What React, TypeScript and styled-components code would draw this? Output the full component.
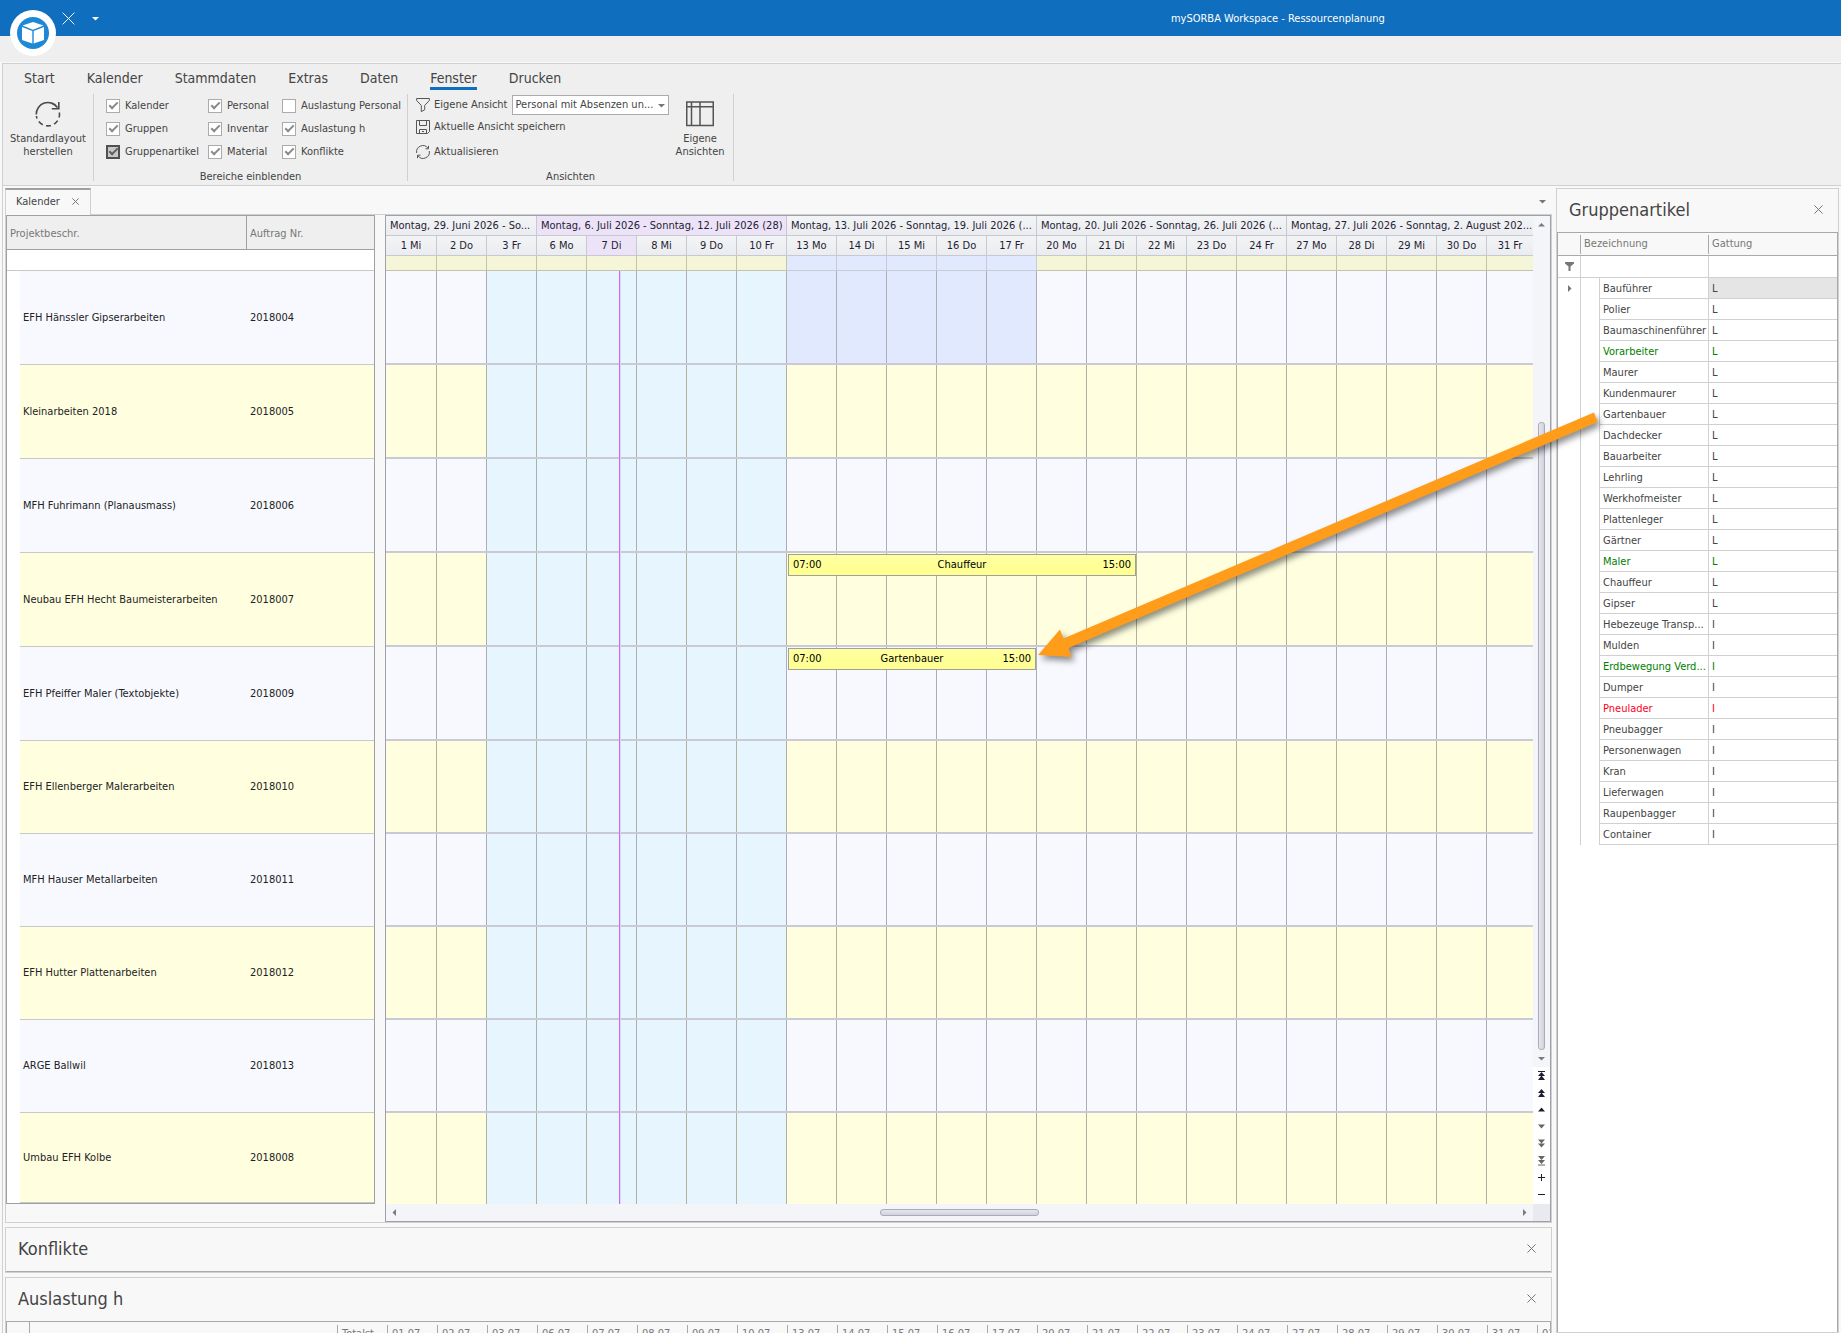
import React from "react";
import styled, { createGlobalStyle, css } from "styled-components";

/* ---------- data ---------- */

const projects = [
  { name: "EFH Hänssler Gipserarbeiten", nr: "2018004", height: 94 },
  { name: "Kleinarbeiten 2018", nr: "2018005", height: 94 },
  { name: "MFH Fuhrimann (Planausmass)", nr: "2018006", height: 94 },
  { name: "Neubau EFH Hecht Baumeisterarbeiten", nr: "2018007", height: 94 },
  { name: "EFH Pfeiffer Maler (Textobjekte)", nr: "2018009", height: 94 },
  { name: "EFH Ellenberger Malerarbeiten", nr: "2018010", height: 93 },
  { name: "MFH Hauser Metallarbeiten", nr: "2018011", height: 93 },
  { name: "EFH Hutter Plattenarbeiten", nr: "2018012", height: 93 },
  { name: "ARGE Ballwil", nr: "2018013", height: 93 },
  { name: "Umbau EFH Kolbe", nr: "2018008", height: 90 },
];

const weeks = [
  { title: "Montag, 29. Juni 2026 - So...", span: 3, current: false },
  { title: "Montag, 6. Juli 2026 - Sonntag, 12. Juli 2026 (28)", span: 5, current: true },
  { title: "Montag, 13. Juli 2026 - Sonntag, 19. Juli 2026 (...", span: 5, current: false },
  { title: "Montag, 20. Juli 2026 - Sonntag, 26. Juli 2026 (...", span: 5, current: false },
  { title: "Montag, 27. Juli 2026 - Sonntag, 2. August 202...", span: 5, current: false },
];

const days = [
  "1 Mi", "2 Do", "3 Fr",
  "6 Mo", "7 Di", "8 Mi", "9 Do", "10 Fr",
  "13 Mo", "14 Di", "15 Mi", "16 Do", "17 Fr",
  "20 Mo", "21 Di", "22 Mi", "23 Do", "24 Fr",
  "27 Mo", "28 Di", "29 Mi", "30 Do", "31 Fr",
];

const appointments = [
  { row: 3, column: 9, span: 7, title: "Chauffeur", from: "07:00", to: "15:00" },
  { row: 4, column: 9, span: 5, title: "Gartenbauer", from: "07:00", to: "15:00" },
];

const articles: { name: string; type: string; tone?: "green" | "red" }[] = [
  { name: "Bauführer", type: "L" },
  { name: "Polier", type: "L" },
  { name: "Baumaschinenführer", type: "L" },
  { name: "Vorarbeiter", type: "L", tone: "green" },
  { name: "Maurer", type: "L" },
  { name: "Kundenmaurer", type: "L" },
  { name: "Gartenbauer", type: "L" },
  { name: "Dachdecker", type: "L" },
  { name: "Bauarbeiter", type: "L" },
  { name: "Lehrling", type: "L" },
  { name: "Werkhofmeister", type: "L" },
  { name: "Plattenleger", type: "L" },
  { name: "Gärtner", type: "L" },
  { name: "Maler", type: "L", tone: "green" },
  { name: "Chauffeur", type: "L" },
  { name: "Gipser", type: "L" },
  { name: "Hebezeuge Transp...", type: "I" },
  { name: "Mulden", type: "I" },
  { name: "Erdbewegung Verd...", type: "I", tone: "green" },
  { name: "Dumper", type: "I" },
  { name: "Pneulader", type: "I", tone: "red" },
  { name: "Pneubagger", type: "I" },
  { name: "Personenwagen", type: "I" },
  { name: "Kran", type: "I" },
  { name: "Lieferwagen", type: "I" },
  { name: "Raupenbagger", type: "I" },
  { name: "Container", type: "I" },
];

const areas = [
  ["Kalender", true], ["Personal", true], ["Auslastung Personal", false],
  ["Gruppen", true], ["Inventar", true], ["Auslastung h", true],
  ["Gruppenartikel", true], ["Material", true], ["Konflikte", true],
] as const;

const tabs = ["Start", "Kalender", "Stammdaten", "Extras", "Daten", "Fenster", "Drucken"];

/* ---------- base ---------- */

const GlobalStyle = createGlobalStyle`
  *, *::before, *::after { box-sizing: border-box; }
  body {
    margin: 0;
    font: 11px/14px "DejaVu Sans Condensed", "DejaVu Sans", sans-serif;
    color: #444;
    background: #f8f8f8;
  }
  button, input, select { font: inherit; color: inherit; }
  h1, h2 { margin: 0; font-weight: normal; }
`;

const plainButton = css`
  display: flex;
  align-items: center;
  justify-content: center;
  padding: 0;
  border: 0;
  background: none;
  cursor: pointer;
`;

const Window = styled.div`
  position: relative;
  display: flex;
  flex-direction: column;
  height: 100vh;
  overflow: hidden;
`;

/* ---------- title bar ---------- */

const TitleBar = styled.header`
  display: flex;
  flex: none;
  align-items: center;
  height: 36px;
  background: #106ebe;
  color: #fff;
`;

const QuickAccess = styled.div`
  display: flex;
  align-items: center;
  gap: 13px;
  height: 36px;
  padding-left: 61px;
`;

const QuickButton = styled.button`
  ${plainButton}
  width: 14px;
  height: 14px;
`;

const Spacer = styled.div<{ $grow: number }>`
  flex: ${(p) => p.$grow} 1 0;
`;

const WindowTitle = styled.h1`
  padding-top: 2px;
  font-size: 11px;
  line-height: 14px;
`;

const LogoButton = styled.button`
  ${plainButton}
  position: absolute;
  top: 10px;
  left: 10px;
  width: 46px;
  height: 46px;
  border-radius: 50%;
  background: #fff;
`;

const CaptionStrip = styled.div`
  flex: none;
  height: 27px;
  background: #efefef;
  border-bottom: 1px solid #f8f8f8;
`;

/* ---------- ribbon ---------- */

const Frame = styled.div`
  display: flex;
  flex: 1;
  flex-direction: column;
  min-height: 0;
  margin-left: 2px;
  border-top: 1px solid #d0d0d0;
  border-left: 1px solid #d0d0d0;
`;

const Ribbon = styled.div`
  flex: none;
  background: #efefef;
  border-bottom: 1px solid #d0d0d0;
`;

const RibbonTabs = styled.nav`
  display: flex;
  gap: 32px;
  padding: 5px 21px 4px;
`;

const RibbonTab = styled.a<{ $active: boolean }>`
  border-bottom: 3px solid ${(p) => (p.$active ? "#106ebe" : "transparent")};
  color: #444;
  font-size: 14px;
  line-height: 18px;
  text-decoration: none;
`;

const RibbonGroups = styled.div`
  display: flex;
  height: 91px;
`;

const RibbonGroup = styled.section`
  display: flex;
  flex-direction: column;
  justify-content: space-between;
`;

const GroupBody = styled.div`
  display: flex;
  gap: 6px;
  padding: 0 8px;
`;

const GroupCaption = styled.div`
  line-height: 16px;
  text-align: center;
`;

const Separator = styled.div`
  width: 1px;
  height: 87px;
  background: #d0d0d0;
`;

const LargeButton = styled.button<{ $width: number }>`
  ${plainButton}
  flex-direction: column;
  justify-content: flex-start;
  gap: 5px;
  width: ${(p) => p.$width}px;
  padding-top: 7px;
  line-height: 13px;
`;

const CheckGrid = styled.div`
  display: grid;
  grid-template-columns: 102px 74px auto;
  grid-auto-rows: 23px;
  padding: 0 6px 0 12px;
`;

const CheckLabel = styled.label`
  display: flex;
  align-items: center;
  gap: 5px;
  white-space: nowrap;
`;

const CheckBox = styled.input<{ $focused: boolean }>`
  appearance: none;
  display: grid;
  flex: none;
  place-items: center;
  width: 14px;
  height: 14px;
  margin: 0;
  border: ${(p) => (p.$focused ? "2px solid #505050" : "1px solid #ababab")};
  background: ${(p) => (p.$focused ? "#c8c8c8" : "#fff")};

  &:checked::after {
    content: "";
    width: 9px;
    height: 5px;
    border: solid ${(p) => (p.$focused ? "#606060" : "#8a8a8a")};
    border-width: 0 0 2px 2px;
    transform: translateY(-1px) rotate(-45deg);
  }
`;

const ViewRows = styled.div`
  display: grid;
  grid-template-rows: 21px 24px 26px;
  width: 253px;
`;

const ViewRow = styled.div`
  display: flex;
  align-items: center;
  gap: 4px;
`;

const ViewButton = styled.button`
  ${plainButton}
  justify-content: flex-start;
  gap: 4px;
`;

const SelectWrap = styled.div`
  position: relative;
  flex: 1;
  svg {
    position: absolute;
    top: 7px;
    right: 4px;
    pointer-events: none;
  }
`;

const ViewSelect = styled.select`
  appearance: none;
  display: block;
  width: 100%;
  height: 20px;
  padding: 0 0 0 3px;
  border: 1px solid #ababab;
  border-radius: 0;
  background: #fff;
`;

/* ---------- workspace ---------- */

const Workspace = styled.main`
  display: flex;
  flex: 1;
  gap: 4px;
  min-height: 0;
  padding: 2px 2px 0;
`;

const MainColumn = styled.div`
  display: flex;
  flex: 1;
  flex-direction: column;
  gap: 4px;
  min-width: 0;
  overflow: hidden;
  > * { flex: none; }
`;

const TabStrip = styled.div`
  display: flex;
  align-items: center;
  justify-content: space-between;
  height: 27px;
  padding-right: 2px;
  box-shadow: inset 0 -1px 0 #d0d0d0;
`;

const DocumentTab = styled.div`
  display: flex;
  align-items: center;
  align-self: stretch;
  justify-content: space-between;
  width: 86px;
  padding: 0 10px 2px;
  border: solid #d0d0d0;
  border-width: 2px 1px 0;
  border-top-color: #a0a0a0;
  background: #f8f8f8;
`;

const IconButton = styled.button<{ $size: number }>`
  ${plainButton}
  width: ${(p) => p.$size}px;
  height: ${(p) => p.$size}px;
`;

const CalendarBody = styled.div`
  display: flex;
  align-items: flex-start;
  gap: 10px;
  border: solid #d0d0d0;
  border-width: 0 1px 1px;
`;

const ProjectTable = styled.table`
  flex: none;
  width: 369px;
  border: 1px solid #a0a0a0;
  border-spacing: 0;
  table-layout: fixed;
  background: #fff;
  color: #222;
  th {
    height: 34px;
    padding: 2px 3px 0;
    border-bottom: 1px solid #a0a0a0;
    background: #efefef;
    color: #777;
    font-weight: normal;
    text-align: left;
  }
  th:first-child { border-right: 1px solid #a0a0a0; }
`;

const BlankCell = styled.td`
  height: 21px;
  padding: 0;
  border-bottom: 1px solid #c8c8c8;
`;

const IndentCell = styled.td`
  padding: 0;
`;

const ProjectCell = styled.td<{ $height: number; $alt: boolean }>`
  height: ${(p) => p.$height}px;
  padding: 0 3px;
  border-bottom: 1px solid #c8c8c8;
  background: ${(p) => (p.$alt ? "#ffffe0" : "#f8f9ff")};
  white-space: nowrap;
`;

/* ---------- scheduler ---------- */

const Scheduler = styled.div`
  display: grid;
  flex: 1;
  grid-template-columns: minmax(0, 1fr) 17px;
  grid-template-rows: auto 17px;
  min-width: 0;
  border: 1px solid #a0a0ac;
  color: #1f1d33;
`;

const Timeline = styled.div`
  position: relative;
  display: flex;
  flex-direction: column;
  height: 988px;
`;

const dayColumns = css`
  display: grid;
  grid-template-columns: minmax(0, 51fr) repeat(21, minmax(0, 50fr)) minmax(0, 46fr);
`;

const HeaderRow = styled.div`
  ${dayColumns}
  height: 20px;
`;

const HeaderCell = styled.div<{ $span: number; $current: boolean; $center?: boolean }>`
  grid-column: span ${(p) => p.$span};
  overflow: hidden;
  padding: ${(p) => (p.$center ? "0" : "0 0 0 4px")};
  border-right: 1px solid #c8c8d2;
  border-bottom: 1px solid #c8c8d2;
  background: ${(p) => (p.$current ? "#ece3f8" : "linear-gradient(#f3f4f6, #ebecef)")};
  line-height: 20px;
  text-align: ${(p) => (p.$center ? "center" : "left")};
  white-space: nowrap;
  &:last-child { border-right: 0; }
`;

const AllDayRow = styled.div`
  ${dayColumns}
  height: 15px;
`;

const AllDayCell = styled.div<{ $selected: boolean }>`
  border: solid ${(p) => (p.$selected ? "#c8cad8" : "#c3c4aa")};
  border-width: 0 1px 1px 0;
  background: ${(p) => (p.$selected ? "#e0e9fe" : "#f5f6d8")};
  &:last-child { border-right: 0; }
`;

const ResourceRow = styled.div<{ $height: number }>`
  ${dayColumns}
  flex: none;
  height: ${(p) => p.$height}px;
  border-bottom: 2px solid #c9cad6;
  &:last-of-type {
    flex: 1;
    border-bottom: 0;
  }
`;

const slotColors = {
  light: "#f8f9ff",
  yellow: "#ffffe0",
  blue: "#e7f5fe",
  selected: "#e0e9fe",
};

const Slot = styled.div<{ $column: number; $kind: keyof typeof slotColors; $alt: boolean }>`
  grid-row: 1;
  grid-column: ${(p) => p.$column};
  border-right: ${(p) => (p.$column === days.length ? "0" : "1px")} solid ${(p) => (p.$alt ? "#b1b1a0" : "#adadb5")};
  background: ${(p) => slotColors[p.$kind]};
`;

const Appointment = styled.button<{ $column: number; $span: number }>`
  display: flex;
  grid-row: 1;
  grid-column: ${(p) => p.$column} / span ${(p) => p.$span};
  align-items: center;
  align-self: start;
  justify-content: space-between;
  height: 22px;
  margin: 1px 1px 0;
  padding: 0 4px;
  border: 1px solid #a0a0a0;
  background: linear-gradient(#ffffa0, #ffff90);
  color: #000;
`;

const NowLine = styled.i`
  position: absolute;
  top: 55px;
  bottom: 0;
  left: 20.3%;
  width: 1px;
  background: #c86bef;
  box-shadow: 1px 0 0 #e2d3f8;
`;

const VerticalBar = styled.div`
  display: flex;
  flex-direction: column;
`;

const VerticalTrack = styled.div`
  display: flex;
  flex: 1;
  flex-direction: column;
  align-items: center;
  background: #f4f5f8;
`;

const VerticalThumb = styled.div`
  flex: 628 1 0;
  width: 7px;
  border: 1px solid #a9abb8;
  border-radius: 3px;
  background: linear-gradient(90deg, #e6e7ed, #d0d2dc);
`;

const NavButtons = styled.div`
  display: flex;
  flex-direction: column;
  height: 137px;
  background: #fff;
`;

const HorizontalBar = styled.div`
  display: flex;
  align-items: center;
  background: #f4f5f8;
`;

const HorizontalThumb = styled.div`
  flex: 157 1 0;
  height: 7px;
  border: 1px solid #a9abb8;
  border-radius: 3px;
  background: linear-gradient(#e6e7ed, #d0d2dc);
`;

const Corner = styled.div`
  background: #e9eaef;
`;

/* ---------- panels ---------- */

const Panel = styled.section`
  border: 1px solid #d0d0d0;
  background: #f8f8f8;
`;

const PanelHeader = styled.div`
  display: flex;
  align-items: center;
  justify-content: space-between;
  height: 43px;
  padding: 0 12px 2px;
`;

const PanelTitle = styled.h2`
  font-size: 18px;
  line-height: 24px;
`;

const PanelEnd = styled.div`
  height: 1px;
  background: #a9a9a9;
`;

const LoadTable = styled.table`
  width: 100%;
  border: 1px solid #a9a9a9;
  border-spacing: 0;
  table-layout: fixed;
  color: #777;
  th {
    height: 24px;
    padding: 2px 0;
    font-weight: normal;
    text-align: left;
  }
`;

const LoadMarker = styled.th`
  border-right: 1px solid #a9a9a9;
`;

const HeadLabel = styled.span<{ $edge?: "left" | "right" }>`
  display: block;
  overflow: hidden;
  height: 19px;
  padding-left: ${(p) => (p.$edge ? "3px" : "4px")};
  border: solid #a9a9a9;
  border-width: ${(p) => (p.$edge === "right" ? "0 1px 0 0" : p.$edge === "left" ? "0" : "0 0 0 1px")};
  line-height: 18px;
  white-space: nowrap;
`;

const SidePanel = styled(Panel)`
  display: flex;
  flex: none;
  flex-direction: column;
  width: 283px;
`;

const SideBody = styled.div`
  flex: 1;
  border: solid #a9a9a9;
  border-width: 1px 1px 0;
  background: #fff;
`;

const ArticleTable = styled.table`
  width: 100%;
  border-spacing: 0;
  table-layout: fixed;
  th {
    height: 23px;
    padding: 2px 0 1px;
    border-bottom: 1px solid #a9a9a9;
    background: #f8f8f8;
    color: #777;
    font-weight: normal;
    text-align: left;
  }
`;

const FilterCell = styled.td`
  height: 22px;
  padding: 0;
  border-bottom: 1px solid #d0d0d0;
  &:not(:last-child) { border-right: 1px solid #d0d0d0; }
`;

const FilterInput = styled.input`
  display: block;
  width: 100%;
  height: 20px;
  padding: 0 3px;
  border: 0;
  outline: 0;
  background: none;
`;

const MarkerCell = styled.td`
  height: 21px;
  padding: 0;
  border-right: 1px solid #d0d0d0;
`;

const CellIcon = styled.span`
  display: flex;
  align-items: center;
  justify-content: center;
`;

const toneColors = { green: "#008000", red: "#ff0020" };

const ArticleCell = styled.td<{ $tone?: "green" | "red"; $focused?: boolean }>`
  overflow: hidden;
  height: 21px;
  padding: 1px 0 0 3px;
  border-bottom: 1px solid #d0d0d0;
  background: ${(p) => (p.$focused ? "#e5e5e5" : "#fff")};
  color: ${(p) => (p.$tone ? toneColors[p.$tone] : "#444")};
  white-space: nowrap;
  &:not(:last-child) { border-right: 1px solid #d0d0d0; }
`;

const ArrowOverlay = styled.svg`
  position: absolute;
  top: 400px;
  left: 1030px;
  pointer-events: none;
  filter: drop-shadow(3px 4px 3px rgba(0, 0, 0, 0.45));
`;

/* ---------- icons ---------- */

const CloseIcon = ({ size, color = "#777" }: { size: number; color?: string }) => (
  <svg width={size} height={size} viewBox="0 0 10 10" stroke={color} strokeWidth={10 / size} fill="none">
    <path d="M.5 .5l9 9M9.5 .5l-9 9" />
  </svg>
);

const Caret = ({ color = "#777", dir = "down" }: { color?: string; dir?: "down" | "up" | "left" | "right" }) => {
  const points = { down: "0,2 7,2 3.5,5.5", up: "0,5.5 7,5.5 3.5,2", left: "5,0 5,7 1.5,3.5", right: "2,0 2,7 5.5,3.5" }[dir];
  return (
    <svg width="7" height="7" viewBox="0 0 7 7" fill={color}>
      <polygon points={points} />
    </svg>
  );
};

const Logo = () => (
  <svg width="32" height="32" viewBox="0 0 32 32">
    <circle cx="16" cy="16" r="16" fill="#1e88d6" />
    <g fill="#fff">
      <path d="M5.5 8.6L16 5l10.5 3.6L16 12.8z" />
      <path d="M5 10l10.3 4v12.600L5 23z" />
      <path d="M27 10l-10.300 4v12.600L27 23z" />
    </g>
  </svg>
);

const RestoreIcon = () => (
  <svg width="26" height="26" viewBox="0 0 26 26" fill="none" stroke="#4a4a4a" strokeWidth="1.6">
    <path d="M1.300 13.500A11.600 11.600 0 0 1 22.500 6.600" />
    <path d="M23.800 1v6.800h-7" />
    <path d="M24.400 11.500a11.600 11.600 0 0 1-23 3.500" strokeDasharray="5 3.400" />
  </svg>
);

const FunnelIcon = () => (
  <svg width="14" height="14" viewBox="0 0 14 14" fill="none" stroke="#555">
    <path d="M.6 .5h12.800v2L8.700 7.400v4.400l-3.400 1.800V7.400L.6 2.500z" />
  </svg>
);

const SaveIcon = () => (
  <svg width="14" height="14" viewBox="0 0 14 14" fill="none" stroke="#555">
    <path d="M.5 .5h13v11l-2 2H.5z" />
    <path d="M3.500 .5v5h7v-5M3.500 13.500v-4h7v4M6 11.500h2" />
  </svg>
);

const RefreshIcon = () => (
  <svg width="14" height="14" viewBox="0 0 14 14" fill="none" stroke="#555">
    <path d="M.7 8A6.300 6.300 0 0 1 12 3.200M13.300 6A6.300 6.300 0 0 1 2 10.800" />
    <path d="M12.500 .8v3h-3M1.500 13.200v-3h3" />
  </svg>
);

const ViewsIcon = () => (
  <svg width="28" height="26" viewBox="0 0 28 26" fill="none" stroke="#555" strokeWidth="1.500">
    <path d="M.75 1h26.500v23.500H.75zM.75 5.800h26.500M5.500 1v23.500M14 1v23.500" />
  </svg>
);

const FilterIcon = () => (
  <svg width="9" height="9" viewBox="0 0 9 9" fill="#777">
    <path d="M0 0h9v1.500L5.500 4.500V9h-2V4.500L0 1.500z" />
  </svg>
);

const dark = "#1f1d33";
const navIcons: { label: string; color: string; path: string }[] = [
  { label: "Erste Ressource", color: dark, path: "M0 0h7v1H0zM3.500 1L7 5H0zM3.500 4.500L7 9H0z" },
  { label: "Vorherige Seite", color: dark, path: "M3.500 1L7 5H0zM3.500 4.500L7 9H0z" },
  { label: "Vorherige Ressource", color: dark, path: "M3.500 2.500L7 6.500H0z" },
  { label: "Nächste Ressource", color: "#666", path: "M3.500 6.500L7 2.500H0z" },
  { label: "Nächste Seite", color: "#666", path: "M3.500 4.500L7 .5H0zM3.500 8.500L7 4.500H0z" },
  { label: "Letzte Ressource", color: "#666", path: "M0 8.500h7v1H0zM3.500 4L7 0H0zM3.500 8L7 4H0z" },
  { label: "Mehr Ressourcen", color: dark, path: "M0 4h7v1H0zM3 1h1v7H3z" },
  { label: "Weniger Ressourcen", color: dark, path: "M0 4h7v1H0z" },
];

const DragArrow = () => (
  <ArrowOverlay width="590" height="280" viewBox="0 0 590 280" fill="#ff9c1a" aria-hidden="true">
    <polygon points="8,255 30,229.500 33.500,238.500 564,12.500 567.500,22 38.500,248 41.500,257" />
  </ArrowOverlay>
);

/* ---------- sections ---------- */

const RibbonSection = () => (
  <Ribbon>
    <RibbonTabs>
      {tabs.map((t) => (
        <RibbonTab key={t} href="#" $active={t === "Fenster"}>{t}</RibbonTab>
      ))}
    </RibbonTabs>
    <RibbonGroups>
      <RibbonGroup>
        <LargeButton $width={90}>
          <RestoreIcon />
          <span>Standardlayout<br />herstellen</span>
        </LargeButton>
      </RibbonGroup>
      <Separator />
      <RibbonGroup>
        <CheckGrid>
          {areas.map(([label, checked]) => (
            <CheckLabel key={label}>
              <CheckBox type="checkbox" defaultChecked={checked} $focused={label === "Gruppenartikel"} />
              {label}
            </CheckLabel>
          ))}
        </CheckGrid>
        <GroupCaption>Bereiche einblenden</GroupCaption>
      </RibbonGroup>
      <Separator />
      <RibbonGroup>
        <GroupBody>
          <ViewRows>
            <ViewRow>
              <FunnelIcon />
              <label htmlFor="view">Eigene Ansicht</label>
              <SelectWrap>
                <ViewSelect id="view">
                  <option>Personal mit Absenzen un...</option>
                </ViewSelect>
                <Caret />
              </SelectWrap>
            </ViewRow>
            <ViewButton><SaveIcon />Aktuelle Ansicht speichern</ViewButton>
            <ViewButton><RefreshIcon />Aktualisieren</ViewButton>
          </ViewRows>
          <LargeButton $width={50}>
            <ViewsIcon />
            <span>Eigene<br />Ansichten</span>
          </LargeButton>
        </GroupBody>
        <GroupCaption>Ansichten</GroupCaption>
      </RibbonGroup>
      <Separator />
    </RibbonGroups>
  </Ribbon>
);

const ProjectList = () => (
  <ProjectTable>
    <colgroup>
      <col style={{ width: 13 }} />
      <col />
      <col style={{ width: 127 }} />
    </colgroup>
    <thead>
      <tr>
        <th colSpan={2}>Projektbeschr.</th>
        <th>Auftrag Nr.</th>
      </tr>
    </thead>
    <tbody>
      <tr><BlankCell colSpan={3} /></tr>
      {projects.map((p, i) => (
        <tr key={p.nr}>
          <IndentCell />
          <ProjectCell $height={p.height} $alt={i % 2 === 1}>{p.name}</ProjectCell>
          <ProjectCell $height={p.height} $alt={i % 2 === 1}>{p.nr}</ProjectCell>
        </tr>
      ))}
    </tbody>
  </ProjectTable>
);

const slotKind = (row: number, day: number): keyof typeof slotColors => {
  if (day >= 2 && day <= 7) return "blue";
  if (row === 0 && day >= 8 && day <= 12) return "selected";
  return row % 2 === 1 ? "yellow" : "light";
};

const SchedulerSection = () => (
  <Scheduler>
    <Timeline>
      <HeaderRow>
        {weeks.map((w) => (
          <HeaderCell key={w.title} $span={w.span} $current={w.current}>{w.title}</HeaderCell>
        ))}
      </HeaderRow>
      <HeaderRow>
        {days.map((d) => (
          <HeaderCell key={d} $span={1} $current={d === "7 Di"} $center>{d}</HeaderCell>
        ))}
      </HeaderRow>
      <AllDayRow>
        {days.map((d, i) => (
          <AllDayCell key={d} $selected={i >= 8 && i <= 12} />
        ))}
      </AllDayRow>
      <NowLine />
      {projects.map((p, row) => (
        <ResourceRow key={p.nr} $height={p.height}>
          {days.map((d, i) => (
            <Slot key={d} $column={i + 1} $kind={slotKind(row, i)} $alt={row % 2 === 1} />
          ))}
          {appointments.filter((a) => a.row === row).map((a) => (
            <Appointment key={a.title} $column={a.column} $span={a.span}>
              <span>{a.from}</span>
              <span>{a.title}</span>
              <span>{a.to}</span>
            </Appointment>
          ))}
        </ResourceRow>
      ))}
    </Timeline>
    <VerticalBar>
      <VerticalTrack>
        <IconButton $size={17} aria-label="Nach oben"><Caret dir="up" color="#777a88" /></IconButton>
        <Spacer $grow={189} />
        <VerticalThumb />
        <IconButton $size={17} aria-label="Nach unten"><Caret color="#777a88" /></IconButton>
      </VerticalTrack>
      <NavButtons>
        {navIcons.map((n) => (
          <IconButton key={n.label} $size={17} aria-label={n.label}>
            <svg width="7" height="10" viewBox="0 0 7 10" fill={n.color}><path d={n.path} /></svg>
          </IconButton>
        ))}
      </NavButtons>
    </VerticalBar>
    <HorizontalBar>
      <IconButton $size={17} aria-label="Nach links"><Caret dir="left" color="#777a88" /></IconButton>
      <Spacer $grow={478} />
      <HorizontalThumb />
      <Spacer $grow={478} />
      <IconButton $size={17} aria-label="Nach rechts"><Caret dir="right" color="#777a88" /></IconButton>
    </HorizontalBar>
    <Corner />
  </Scheduler>
);

const PanelHead = ({ title }: { title: string }) => (
  <PanelHeader>
    <PanelTitle>{title}</PanelTitle>
    <IconButton $size={15} aria-label={`${title} schliessen`}><CloseIcon size={9} /></IconButton>
  </PanelHeader>
);

const LoadSection = () => (
  <Panel>
    <PanelHead title="Auslastung h" />
    <LoadTable>
      <colgroup>
        <col style={{ width: 23 }} />
        <col />
        {["Totalst", ...days].map((d) => <col key={d} style={{ width: 50 }} />)}
        <col style={{ width: 13 }} />
      </colgroup>
      <thead>
        <tr>
          <LoadMarker />
          <th />
          <th><HeadLabel>Totalst...</HeadLabel></th>
          {days.map((d) => (
            <th key={d}><HeadLabel>{d.split(" ")[0].padStart(2, "0")}.07...</HeadLabel></th>
          ))}
          <th><HeadLabel>01</HeadLabel></th>
        </tr>
      </thead>
    </LoadTable>
  </Panel>
);

const ArticlePanel = () => (
  <SidePanel>
    <PanelHead title="Gruppenartikel" />
    <SideBody>
      <ArticleTable>
        <colgroup>
          <col style={{ width: 23 }} />
          <col style={{ width: 19 }} />
          <col style={{ width: 109 }} />
          <col />
        </colgroup>
        <thead>
          <tr>
            <th><HeadLabel $edge="right" /></th>
            <th colSpan={2}><HeadLabel $edge="right">Bezeichnung</HeadLabel></th>
            <th><HeadLabel $edge="left">Gattung</HeadLabel></th>
          </tr>
        </thead>
        <tbody>
          <tr>
            <FilterCell><CellIcon><FilterIcon /></CellIcon></FilterCell>
            <FilterCell colSpan={2}><FilterInput aria-label="Bezeichnung filtern" /></FilterCell>
            <FilterCell><FilterInput aria-label="Gattung filtern" /></FilterCell>
          </tr>
          {articles.map((a, i) => (
            <tr key={a.name}>
              <MarkerCell>{i === 0 && <CellIcon><Caret dir="right" /></CellIcon>}</MarkerCell>
              <MarkerCell />
              <ArticleCell $tone={a.tone}>{a.name}</ArticleCell>
              <ArticleCell $tone={a.tone} $focused={i === 0}>{a.type}</ArticleCell>
            </tr>
          ))}
        </tbody>
      </ArticleTable>
    </SideBody>
  </SidePanel>
);

export default function App() {
  return (
    <Window>
      <GlobalStyle />
      <TitleBar>
        <QuickAccess>
          <QuickButton aria-label="Schliessen"><CloseIcon size={13} color="#fff" /></QuickButton>
          <QuickButton aria-label="Symbolleiste anpassen"><Caret color="#fff" /></QuickButton>
        </QuickAccess>
        <Spacer $grow={1071} />
        <WindowTitle>mySORBA Workspace - Ressourcenplanung</WindowTitle>
        <Spacer $grow={457} />
      </TitleBar>
      <CaptionStrip />
      <LogoButton aria-label="mySORBA"><Logo /></LogoButton>
      <Frame>
        <RibbonSection />
        <Workspace>
          <MainColumn>
            <div>
              <TabStrip>
                <DocumentTab>
                  <span>Kalender</span>
                  <IconButton $size={9} aria-label="Kalender schliessen"><CloseIcon size={7} /></IconButton>
                </DocumentTab>
                <IconButton $size={15} aria-label="Fensterliste"><Caret /></IconButton>
              </TabStrip>
              <CalendarBody>
                <ProjectList />
                <SchedulerSection />
              </CalendarBody>
            </div>
            <Panel>
              <PanelHead title="Konflikte" />
              <PanelEnd />
            </Panel>
            <LoadSection />
          </MainColumn>
          <ArticlePanel />
        </Workspace>
      </Frame>
      <DragArrow />
    </Window>
  );
}
